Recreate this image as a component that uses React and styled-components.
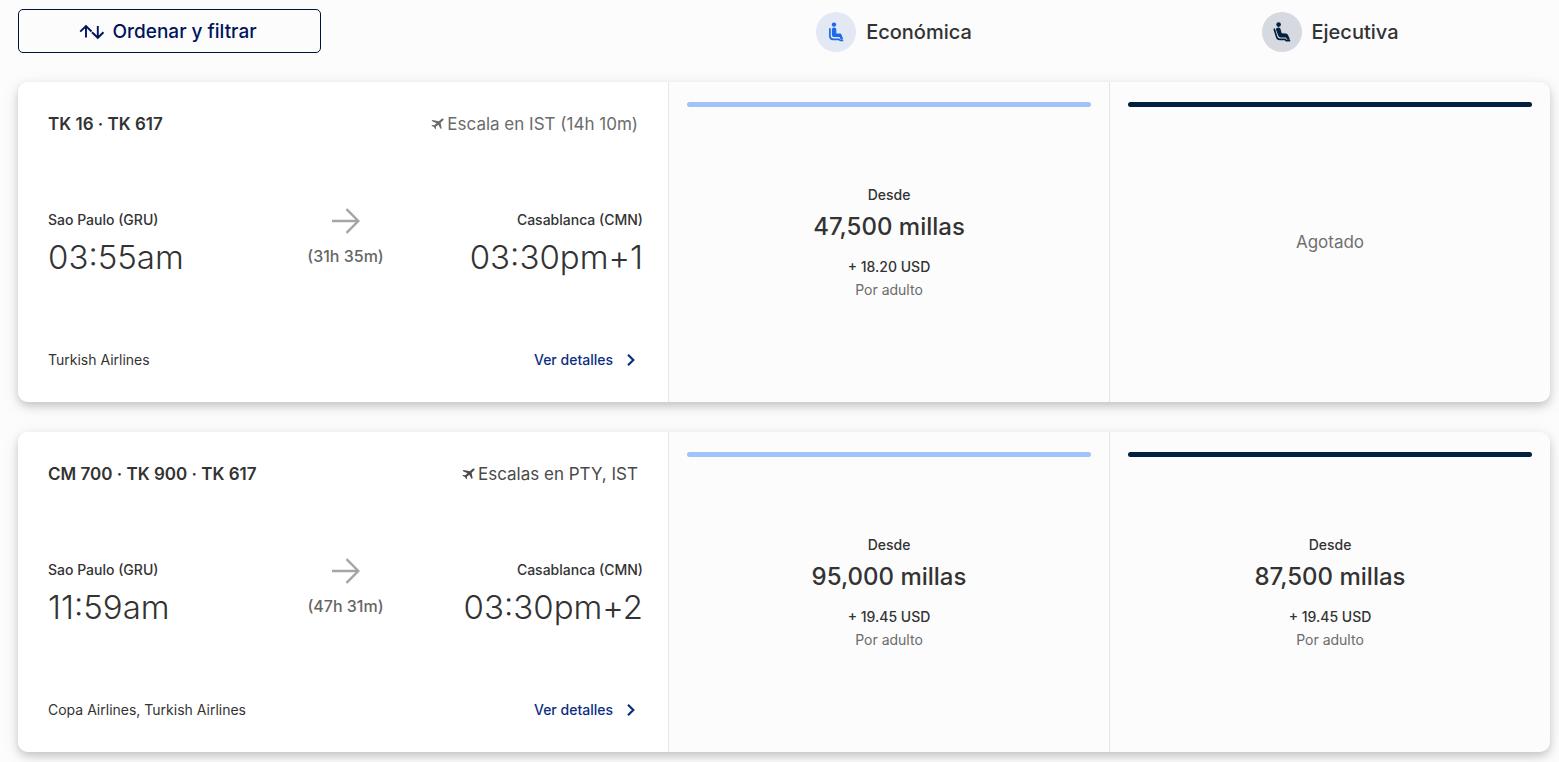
import React from "react";
import styled, { createGlobalStyle } from "styled-components";

const GlobalStyle = createGlobalStyle`
  *, *::before, *::after { box-sizing: border-box; }
  body {
    margin: 0;
    background: #fcfcfc;
    color: #333;
    font-family: Inter, "Liberation Sans", sans-serif;
  }
  p, h2 { margin: 0; }
`;

const Page = styled.main`
  padding: 9px 9px 10px 18px;
`;

const Header = styled.header`
  display: grid;
  grid-template-columns: 658fr 436fr 436fr;
  align-items: center;
  padding-right: 2px;
  margin-bottom: 29px;
`;

const FilterButton = styled.button`
  display: flex;
  align-items: center;
  justify-content: center;
  gap: 7px;
  width: 303px;
  height: 44px;
  padding: 1px 3px 0 0;
  border: 1px solid #00103f;
  border-radius: 5px;
  background: #fcfcfc;
  color: #00145c;
  font: 500 19px/24px Inter, "Liberation Sans", sans-serif;
  cursor: pointer;
`;

const Cabin = styled.div`
  display: flex;
  align-items: center;
  justify-content: center;
  gap: 10px;
  padding-top: 2px;
  font-size: 20px;
  line-height: 24px;
  font-weight: 500;
`;

const CabinBadge = styled.span`
  display: flex;
  align-items: center;
  justify-content: center;
  width: 40px;
  height: 40px;
  border-radius: 50%;
  background: ${(p) => (p.$tone === "economy" ? "#e2e8f4" : "#d6d9df")};
  color: ${(p) => (p.$tone === "economy" ? "#1c69ea" : "#04203f")};
`;

const FlightList = styled.div`
  display: grid;
  gap: 30px;
`;

const Card = styled.article`
  display: grid;
  grid-template-columns: 650fr 441fr 441fr;
  min-height: 320px;
  border-radius: 10px;
  background: #fcfcfc;
  box-shadow: 0 4px 8px rgba(0, 0, 0, 0.18), 0 4px 20px rgba(0, 0, 0, 0.07);
`;

const Itinerary = styled.section`
  display: flex;
  flex-direction: column;
  justify-content: space-between;
  padding: 30px 25px 30px 30px;
  border-radius: 10px 0 0 10px;
  background: #fff;
`;

const Row = styled.div`
  display: flex;
  align-items: center;
  justify-content: space-between;
`;

const FlightNumbers = styled.h2`
  font-size: 17px;
  line-height: 24px;
  font-weight: 600;
`;

const Stops = styled.span`
  display: flex;
  align-items: center;
  gap: 3px;
  margin-right: 5px;
  font-size: 17px;
  line-height: 24px;
  color: ${(p) => (p.$muted ? "#6b6b6b" : "#4a4a4a")};
`;

const Route = styled.div`
  display: grid;
  grid-template-columns: 1fr auto 1fr;
  align-items: start;
  padding-top: 6px;
`;

const Endpoint = styled.div`
  text-align: ${(p) => p.$align || "left"};
`;

const City = styled.p`
  font-size: 14px;
  line-height: 24px;
  font-weight: 500;
`;

const Time = styled.p`
  font-size: 33px;
  line-height: 50px;
  font-weight: 300;
`;

const Duration = styled.div`
  display: flex;
  flex-direction: column;
  align-items: center;
  gap: 10px;
  color: #666;
  font-size: 16px;
  line-height: 24px;
  font-weight: 500;
`;

const Airlines = styled.span`
  font-size: 14px;
  line-height: 24px;
`;

const DetailsButton = styled.button`
  display: flex;
  align-items: center;
  gap: 14px;
  margin-right: 8px;
  padding: 0;
  border: 0;
  background: none;
  color: #0a2f7f;
  font: 500 14px/24px Inter, "Liberation Sans", sans-serif;
  cursor: pointer;
`;

const Fare = styled.section`
  display: flex;
  flex-direction: column;
  padding: 20px 18px;
  border-left: 1px solid #e6e6e6;
  text-align: center;
`;

const FareBar = styled.div`
  height: 5px;
  border-radius: 3px;
  background: ${(p) => (p.$tone === "economy" ? "#9fc3fa" : "#04203f")};
`;

const FareBody = styled.div`
  flex: 1;
  display: flex;
  flex-direction: column;
  justify-content: center;
  padding-bottom: 5px;
`;

const FareText = styled.p`
  font-size: 14px;
  line-height: 23px;
  font-weight: ${(p) => (p.$muted ? 400 : 500)};
  color: ${(p) => (p.$muted ? "#6b6b6b" : "#333")};
`;

const Miles = styled.p`
  margin-bottom: 7px;
  font-size: 24px;
  line-height: 42px;
  font-weight: 500;
`;

const SoldOut = styled.p`
  font-size: 17px;
  line-height: 24px;
  color: #707070;
`;

const SortIcon = () => (
  <svg width="26" height="18" viewBox="0 0 26 18" fill="none" stroke="currentColor" strokeWidth="1.900" aria-hidden="true">
    <path d="M7 14.500V3M1.200 8.600L7 3l5.500 5.500" />
    <path d="M18.800 3v11.800M13 9.200l5.800 5.600 5.700-5.600" />
  </svg>
);

const SeatIcon = ({ reclined }) =>
  reclined ? (
    <svg width="18" height="20" viewBox="0 0 18 20" fill="currentColor" aria-hidden="true">
      <circle cx="5.600" cy="2.600" r="2.300" />
      <path d="M3.500 6.200C4.600 5 7 5.200 7.500 7l1.200 4.200 4.200.3c1 .1 1.700.6 2.100 1.500l2 4.600-2.300.5-1.900-2.700H7.900c-1.300 0-2.300-.8-2.700-2L3.100 8c-.2-.7-.1-1.300.4-1.800z" />
      <path d="M1.300 7.200l2.300 7.500c.5 1.700 1.500 2.600 3.200 2.600h5.200l1.300 1.300h3.200" fill="none" stroke="currentColor" strokeWidth="1.700" strokeLinecap="round" strokeLinejoin="round" />
    </svg>
  ) : (
    <svg width="16" height="20" viewBox="0 0 16 20" fill="currentColor" aria-hidden="true">
      <circle cx="6" cy="2.600" r="2.200" />
      <path d="M3.900 7.600c0-1.300.9-2.100 2.200-2.100s2.200.8 2.200 2.100v4h3.300c1 0 1.600.5 2 1.400l1.600 4.200-2.300.6-1.400-2.700H6.500c-1.600 0-2.600-1-2.600-2.600z" />
      <path d="M1.900 6.800v7.300c0 2.100 1.100 3.300 3.300 3.300h5.300c.7 0 1 .2 1.300.6l.5.500h2.200" fill="none" stroke="currentColor" strokeWidth="1.700" strokeLinecap="round" />
    </svg>
  );

const PlaneIcon = () => (
  <svg width="13" height="12" viewBox="0 0 14 14" preserveAspectRatio="none" fill="currentColor" aria-hidden="true">
    <path d="M13.400 1c-.8-.6-1.700-.2-2.500.5L8.500 3.700 1.600 2.400l-.9 1 5.300 2.700-2.500 2.500-2.200-.3-.9.800 2.800 1.400 1.300 2.700.9-.9-.2-2.200 2.600-2.300 2.700 5.100 1-1-1.200-6.400 2.300-2.200c.8-.8 1.200-1.700.8-2.300z" />
  </svg>
);

const ArrowIcon = () => (
  <svg width="28" height="26" viewBox="0 0 28 26" fill="none" stroke="#a5a5a5" strokeWidth="2.400" aria-hidden="true">
    <path d="M0 13h26M14.500 1.200L26.300 13 14.500 24.800" />
  </svg>
);

const ChevronIcon = () => (
  <svg width="8" height="12" viewBox="0 0 8 12" fill="none" stroke="currentColor" strokeWidth="2.200" aria-hidden="true">
    <path d="M1 .8L6.300 6 1 11.200" />
  </svg>
);

const flights = [
  {
    numbers: "TK 16 · TK 617",
    stops: "Escala en IST (14h 10m)",
    singleStop: true,
    departure: "03:55am",
    arrival: "03:30pm+1",
    duration: "(31h 35m)",
    airlines: "Turkish Airlines",
    fares: [
      { tone: "economy", miles: "47,500 millas", tax: "+ 18.20 USD" },
      { tone: "business" },
    ],
  },
  {
    numbers: "CM 700 · TK 900 · TK 617",
    stops: "Escalas en PTY, IST",
    departure: "11:59am",
    arrival: "03:30pm+2",
    duration: "(47h 31m)",
    airlines: "Copa Airlines, Turkish Airlines",
    fares: [
      { tone: "economy", miles: "95,000 millas", tax: "+ 19.45 USD" },
      { tone: "business", miles: "87,500 millas", tax: "+ 19.45 USD" },
    ],
  },
];

const FareColumn = ({ tone, miles, tax }) => (
  <Fare>
    <FareBar $tone={tone} />
    <FareBody>
      {miles ? (
        <>
          <FareText>Desde</FareText>
          <Miles>{miles}</Miles>
          <FareText>{tax}</FareText>
          <FareText $muted>Por adulto</FareText>
        </>
      ) : (
        <SoldOut>Agotado</SoldOut>
      )}
    </FareBody>
  </Fare>
);

const FlightCard = ({ flight }) => (
  <Card>
    <Itinerary>
      <Row>
        <FlightNumbers>{flight.numbers}</FlightNumbers>
        <Stops $muted={flight.singleStop}>
          <PlaneIcon />
          {flight.stops}
        </Stops>
      </Row>
      <Route>
        <Endpoint>
          <City>Sao Paulo (GRU)</City>
          <Time>{flight.departure}</Time>
        </Endpoint>
        <Duration>
          <ArrowIcon />
          {flight.duration}
        </Duration>
        <Endpoint $align="right">
          <City>Casablanca (CMN)</City>
          <Time>{flight.arrival}</Time>
        </Endpoint>
      </Route>
      <Row>
        <Airlines>{flight.airlines}</Airlines>
        <DetailsButton type="button">
          Ver detalles
          <ChevronIcon />
        </DetailsButton>
      </Row>
    </Itinerary>
    {flight.fares.map((fare) => (
      <FareColumn key={fare.tone} {...fare} />
    ))}
  </Card>
);

export default function App() {
  return (
    <>
      <GlobalStyle />
      <Page>
        <Header>
          <FilterButton type="button">
            <SortIcon />
            Ordenar y filtrar
          </FilterButton>
          <Cabin>
            <CabinBadge $tone="economy">
              <SeatIcon />
            </CabinBadge>
            Económica
          </Cabin>
          <Cabin>
            <CabinBadge $tone="business">
              <SeatIcon reclined />
            </CabinBadge>
            Ejecutiva
          </Cabin>
        </Header>
        <FlightList>
          {flights.map((flight) => (
            <FlightCard key={flight.numbers} flight={flight} />
          ))}
        </FlightList>
      </Page>
    </>
  );
}
